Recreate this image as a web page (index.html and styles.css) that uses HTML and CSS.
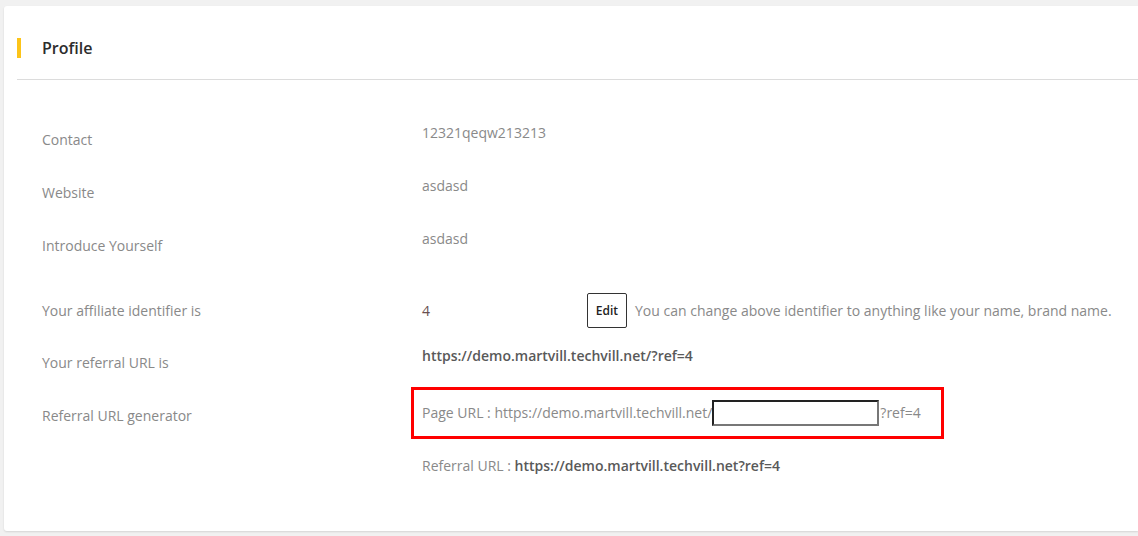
FILE: index.html
```html
<!DOCTYPE html>
<html>
<head>
<meta charset="utf-8">
<link rel="stylesheet" href="styles.css">
</head>
<body>
<div class="card">
  <div class="header">
    <span class="bar"></span>
    <h2 class="title">Profile</h2>
  </div>
  <div class="body">
    <div class="row">
      <div class="label">Contact</div>
      <div class="value up">12321qeqw213213</div>
    </div>
    <div class="row">
      <div class="label">Website</div>
      <div class="value up">asdasd</div>
    </div>
    <div class="row">
      <div class="label">Introduce Yourself</div>
      <div class="value up">asdasd</div>
    </div>
    <div class="row aff">
      <div class="label">Your affiliate identifier is</div>
      <div class="value ident">
        <span class="ident-num">4</span>
        <button class="edit">Edit</button>
        <span class="hint">You can change above identifier to anything like your name, brand name.</span>
      </div>
    </div>
    <div class="row">
      <div class="label">Your referral URL is</div>
      <div class="value up strong">https://demo.martvill.techvill.net/?ref=4</div>
    </div>
    <div class="row">
      <div class="label">Referral URL generator</div>
      <div class="value">
        <div class="gen-box">
          <span>Page URL : https://demo.martvill.techvill.net/</span><input class="page-input" type="text"><span>?ref=4</span>
        </div>
      </div>
    </div>
    <div class="row last">
      <div class="label"></div>
      <div class="value">Referral URL : <span class="strong">https://demo.martvill.techvill.net?ref=4</span></div>
    </div>
  </div>
</div>
</body>
</html>
```
FILE: styles.css
```css
html, body {
  margin: 0;
  padding: 0;
  background: #f1f1f1;
  overflow: hidden;
}
body {
  font-family: "Open Sans", "Noto Sans", sans-serif;
  font-size: 14px;
  color: #898989;
  width: 1138px;
  height: 536px;
}
.card {
  margin: 6px 0 0 4px;
  background: #fff;
  border-radius: 3px 0 0 3px;
  box-shadow: 0 1px 2px rgba(0,0,0,0.12);
  padding: 0 0 0 13px;
  height: 525px;
  box-sizing: border-box;
}
.header {
  height: 74px;
  box-sizing: border-box;
  padding-top: 11px;
  border-bottom: 1px solid #dcdcdc;
  display: flex;
  align-items: center;
}
.bar {
  width: 4px;
  height: 20px;
  background: #fcc419;
}
.title {
  margin: 0 0 0 21px;
  font-size: 16px;
  font-weight: 600;
  color: #2c2c2c;
}
.body {
  padding: 33px 0 0 25px;
}
.row {
  display: grid;
  grid-template-columns: 380px 1fr;
  height: 53px;
  align-items: center;
}
.row.aff {
  margin-top: 12px;
}
.row.aff + .row {
  margin-top: -1px;
}
.row.last {
  height: 50px;
  margin-top: -1px;
}
.label {
  line-height: 20px;
}
.value {
  line-height: 20px;
}
.value.up {
  position: relative;
  top: -7px;
}
.strong {
  font-weight: 600;
  color: #595959;
}
.ident {
  display: flex;
  align-items: center;
}
.ident-num {
  width: 165px;
  color: #6a4f4f;
}
.edit {
  width: 40px;
  height: 35px;
  border: 1px solid #333;
  border-radius: 2px;
  background: #fff;
  font-family: "Open Sans", "Noto Sans", sans-serif;
  font-size: 12px;
  font-weight: 600;
  color: #222;
  padding: 0;
  margin-right: 8px;
}
.gen-box {
  margin-left: -11px;
  width: 533px;
  height: 52px;
  box-sizing: border-box;
  border: 3px solid #ff0000;
  display: flex;
  align-items: center;
  padding-left: 8px;
  position: relative;
  top: -3px;
}
.page-input {
  width: 167px;
  height: 26px;
  box-sizing: border-box;
  border-style: solid;
  border-width: 2px;
  border-color: #222 #777 #777 #222;
  margin: 0 1px 0 0;
  padding: 0;
  background: #fff;
}
```
